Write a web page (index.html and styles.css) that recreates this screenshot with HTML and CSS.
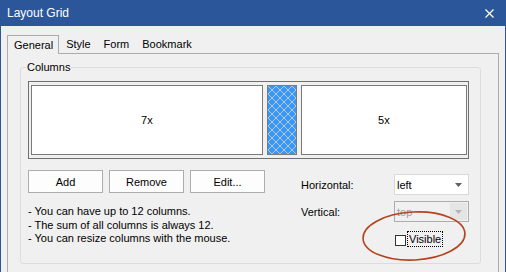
FILE: index.html
```html
<html>
<head>
  <title>Layout Grid</title>
  <link rel="stylesheet" href="styles.css">
</head>
<body>
<div class="window">
  <div class="titlebar">
    <span>Layout Grid</span>
    <svg class="close" width="9" height="9" viewBox="0 0 9 9">
      <path d="M0.5 0.5L8.5 8.5M8.5 0.5L0.5 8.5" stroke="#fff" stroke-width="1.2" fill="none"/>
    </svg>
  </div>

  <div class="tabs">
    <span class="tab active">General</span>
    <span class="tab">Style</span>
    <span class="tab">Form</span>
    <span class="tab">Bookmark</span>
  </div>

  <div class="page">
    <fieldset class="group">
      <legend>Columns</legend>

      <div class="columns">
        <div class="col">7x</div>
        <div class="splitter">
          <svg width="100%" height="100%">
            <defs>
              <pattern id="hatch" width="8" height="8" patternUnits="userSpaceOnUse">
                <rect width="8" height="8" fill="#3399ff"/>
                <path fill="#c4c4c4" d="M0 0h1v1H0zM1 1h1v1H1zM2 2h1v1H2zM3 3h2v2H3zM5 5h1v1H5zM6 6h1v1H6zM7 7h1v1H7zM7 0h1v1H7zM6 1h1v1H6zM5 2h1v1H5zM2 5h1v1H2zM1 6h1v1H1zM0 7h1v1H0z"/>
              </pattern>
            </defs>
            <rect width="100%" height="100%" fill="url(#hatch)"/>
          </svg>
        </div>
        <div class="col narrow">5x</div>
      </div>

      <div class="controls">
        <div class="actions">
          <div class="buttons">
            <button type="button">Add</button>
            <button type="button">Remove</button>
            <button type="button">Edit...</button>
          </div>
          <div class="notes">
            - You can have up to 12 columns.<br>
            - The sum of all columns is always 12.<br>
            - You can resize columns with the mouse.
          </div>
        </div>

        <div class="options">
          <span class="label">Horizontal:</span>
          <div class="combo">
            <span>left</span>
            <span class="drop"><svg width="7" height="4" viewBox="0 0 7 4"><path d="M0 0h7L3.5 4z" fill="#606060"/></svg></span>
          </div>

          <span class="label">Vertical:</span>
          <div class="combo disabled">
            <span>top</span>
            <span class="drop"><svg width="7" height="4" viewBox="0 0 7 4"><path d="M0 0h7L3.5 4z" fill="#b4b4b4"/></svg></span>
          </div>

          <div class="check">
            <span class="box"></span>
            <span class="focus">Visible</span>
          </div>
        </div>
      </div>
    </fieldset>
  </div>
</div>

<svg class="mark" width="506" height="272">
  <ellipse cx="414" cy="236" rx="51" ry="24" transform="rotate(-3 414 236)" fill="none" stroke="#b3441e" stroke-width="1.6"/>
</svg>
</body>
</html>
```

FILE: styles.css
```css
html, body {
  margin: 0;
  padding: 0;
  background: #f0f0f0;
  color: #000;
  font: 11px "Liberation Sans", Arial, sans-serif;
  overflow: hidden;
}
body { position: relative; }

.window {
  height: 272px;
  box-sizing: border-box;
  border-left: 1px solid #2b579a;
  border-right: 1px solid #2b579a;
}

.titlebar {
  height: 26px;
  background: #2b579a;
  color: #fff;
  font-size: 12px;
  display: flex;
  align-items: center;
  justify-content: space-between;
  padding: 0 11px 0 6px;
}

/* tab strip */
.tabs {
  display: flex;
  align-items: flex-end;
  height: 18px;
  margin: 9px 0 0 6px;
}
.tab { height: 16px; line-height: 15px; padding: 0 6px 0 7px; }
.tab.active {
  height: 18px;
  line-height: 18px;
  padding: 0 5px 0 6px;
  border: 1px solid #acacac;
  border-bottom: 0;
  margin-bottom: -1px;
  background: #f0f0f0;
  position: relative;
  z-index: 1;
}

.page {
  border: 1px solid #acacac;
  margin: 0 6px;
  padding: 6px 17px 40px 12px;
}

.group {
  margin: 0;
  border: 1px solid #dcdcdc;
  border-radius: 3px;
  padding: 6px 11px 16px 7px;
}
.group legend { padding: 0 1px; margin-left: -2px; line-height: 15px; }

/* column preview */
.columns {
  display: flex;
  gap: 4px;
  width: 441px;
  height: 78px;
  box-sizing: border-box;
  border: 1px solid #707070;
  padding: 3px 1px 3px 2px;
}
.col {
  flex: 7 1 0;
  background: #fff;
  border: 1px solid #7a7a7a;
  display: flex;
  align-items: center;
  justify-content: center;
}
.col.narrow { flex-grow: 5; }
.splitter {
  flex: none;
  width: 30px;
  box-sizing: border-box;
  border: 1px solid #7a7a7a;
  line-height: 0;
}

.controls { display: flex; margin-top: 11px; }
.actions { width: 273px; }
.buttons { display: flex; gap: 6px; }
button {
  width: 75px;
  height: 23px;
  padding: 0;
  border: 1px solid #adadad;
  background: #fdfdfd;
  color: #000;
  font: inherit;
}
.notes { margin-top: 12px; line-height: 13.5px; }

.options {
  display: grid;
  grid-template-columns: 93px 75px;
  row-gap: 6px;
  align-items: center;
  align-content: start;
  margin-top: 4px;
}
.combo {
  height: 21px;
  box-sizing: border-box;
  border: 1px solid #d9d9d9;
  background: #fff;
  padding-left: 2px;
  display: flex;
  align-items: center;
  justify-content: space-between;
}
.combo.disabled { border-color: #adadad; background: #f0f0f0; color: #a0a0a0; }
.drop {
  width: 17px;
  align-self: stretch;
  margin: 1px;
  display: flex;
  align-items: center;
  justify-content: center;
}
.combo.disabled .drop { background: #e5e5e5; }

.check {
  grid-column: 2;
  margin: 3px 0 0 1px;
  display: flex;
  align-items: center;
  gap: 1px;
}
.check .box {
  width: 11px;
  height: 11px;
  box-sizing: border-box;
  border: 1px solid #333;
  background: #fff;
  margin-top: 2px;
}
.check .focus { border: 1px dotted #000; padding: 0 1px; line-height: 14px; }

.mark { position: absolute; left: 0; top: 0; pointer-events: none; }
```
